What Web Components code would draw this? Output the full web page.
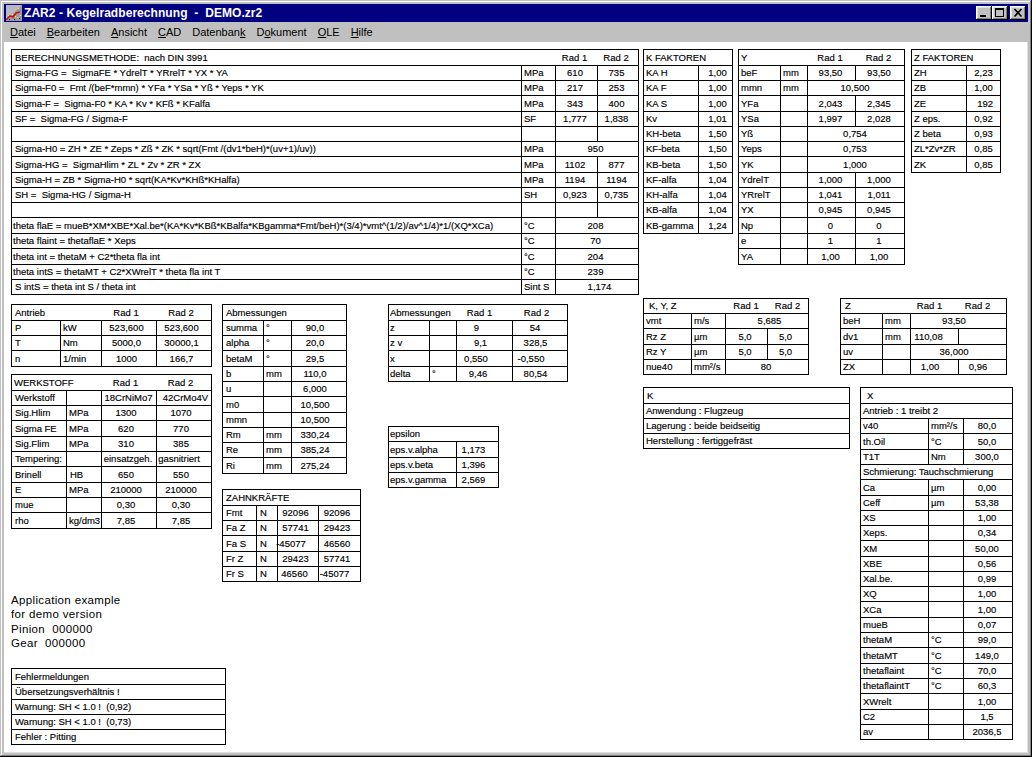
<!DOCTYPE html>
<html lang="de"><head><meta charset="utf-8"><title>ZAR2</title>
<style>html,body{margin:0;padding:0;background:#c0c0c0}</style></head><body>
<z-window>
<z-stack slot="content" dir="row">
 <z-stack w="628">
  <z-t s="1.5" cols="510 34 42 41" rows="16 15 15 16 15 15 15 16 15 15 15 16 15 16 15 15">
   <z-r><z-c span="2" x="3">BERECHNUNGSMETHODE:&nbsp; nach DIN 3991</z-c><z-c nb a="c">Rad 1</z-c><z-c nb a="c">Rad 2</z-c></z-r>
   <z-r><z-c x="3">Sigma-FG =&nbsp; SigmaFE * YdrelT * YRrelT * YX * YA</z-c><z-c>MPa</z-c><z-c a="c">610</z-c><z-c a="c">735</z-c></z-r>
   <z-r><z-c x="3">Sigma-F0 =&nbsp; Fmt /(beF*mmn) * YFa * YSa * Yß * Yeps * YK</z-c><z-c>MPa</z-c><z-c a="c">217</z-c><z-c a="c">253</z-c></z-r>
   <z-r><z-c x="3">Sigma-F =&nbsp; Sigma-F0 * KA * Kv * KFß * KFalfa</z-c><z-c>MPa</z-c><z-c a="c">343</z-c><z-c a="c">400</z-c></z-r>
   <z-r><z-c x="3">SF =&nbsp; Sigma-FG / Sigma-F</z-c><z-c>SF</z-c><z-c a="c">1,777</z-c><z-c a="c">1,838</z-c></z-r>
   <z-r><z-c></z-c><z-c></z-c><z-c></z-c><z-c></z-c></z-r>
   <z-r><z-c x="3">Sigma-H0 = ZH * ZE * Zeps * Zß * ZK * sqrt(Fmt /(dv1*beH)*(uv+1)/uv))</z-c><z-c>MPa</z-c><z-c span="2" a="c">950</z-c></z-r>
   <z-r><z-c x="3">Sigma-HG =&nbsp; SigmaHlim * ZL * Zv * ZR * ZX</z-c><z-c>MPa</z-c><z-c a="c">1102</z-c><z-c a="c">877</z-c></z-r>
   <z-r><z-c x="3">Sigma-H = ZB * Sigma-H0 * sqrt(KA*Kv*KHß*KHalfa)</z-c><z-c>MPa</z-c><z-c a="c">1194</z-c><z-c a="c">1194</z-c></z-r>
   <z-r><z-c x="3">SH =&nbsp; Sigma-HG / Sigma-H</z-c><z-c>SH</z-c><z-c a="c">0,923</z-c><z-c a="c">0,735</z-c></z-r>
   <z-r><z-c></z-c><z-c></z-c><z-c></z-c><z-c></z-c></z-r>
   <z-r><z-c x="1">theta flaE = mueB*XM*XBE*Xal.be*(KA*Kv*KBß*KBalfa*KBgamma*Fmt/beH)*(3/4)*vmt^(1/2)/av^1/4)*1/(XQ*XCa)</z-c><z-c>°C</z-c><z-c span="2" a="c">208</z-c></z-r>
   <z-r><z-c x="1">theta flaint = thetaflaE * Xeps</z-c><z-c>°C</z-c><z-c span="2" a="c">70</z-c></z-r>
   <z-r><z-c x="1">theta int = thetaM + C2*theta fla int</z-c><z-c>°C</z-c><z-c span="2" a="c">204</z-c></z-r>
   <z-r><z-c x="1">theta intS = thetaMT + C2*XWrelT * theta fla int T</z-c><z-c>°C</z-c><z-c span="2" a="c">239</z-c></z-r>
   <z-r><z-c x="3">S intS = theta int S / theta int</z-c><z-c>Sint S</z-c><z-c span="2" a="c" dx="-2.5">1,174</z-c></z-r>
  </z-t>
  <z-stack dir="row" mt="9">
   <z-stack w="211">
    <z-t s="2.5" cols="49 41 55 55" rows="16 15 15 16">
     <z-r><z-c span="2" x="3">Antrieb</z-c><z-c nb a="c">Rad 1</z-c><z-c nb a="c">Rad 2</z-c></z-r>
     <z-r><z-c x="3">P</z-c><z-c>kW</z-c><z-c a="c">523,600</z-c><z-c a="c">523,600</z-c></z-r>
     <z-r><z-c x="3">T</z-c><z-c>Nm</z-c><z-c a="c">5000,0</z-c><z-c a="c">30000,1</z-c></z-r>
     <z-r><z-c x="3">n</z-c><z-c>1/min</z-c><z-c a="c">1000</z-c><z-c a="c">166,7</z-c></z-r>
    </z-t>
    <z-t s="3" mt="7" cols="55 35 55 55" rows="16 15 15 16 15 15 16 15 15 16">
     <z-r><z-c span="2" x="2">WERKSTOFF</z-c><z-c nb a="c">Rad 1</z-c><z-c nb a="c">Rad 2</z-c></z-r>
     <z-r><z-c x="3">Werkstoff</z-c><z-c></z-c><z-c a="c" dx=".5">18CrNiMo7</z-c><z-c a="c" dx="-1.5">42CrMo4V</z-c></z-r>
     <z-r><z-c x="3">Sig.Hlim</z-c><z-c>MPa</z-c><z-c a="c">1300</z-c><z-c a="c">1070</z-c></z-r>
     <z-r><z-c x="3">Sigma FE</z-c><z-c>MPa</z-c><z-c a="c">620</z-c><z-c a="c">770</z-c></z-r>
     <z-r><z-c x="3">Sig.Flim</z-c><z-c>MPa</z-c><z-c a="c">310</z-c><z-c a="c">385</z-c></z-r>
     <z-r><z-c x="3">Tempering:</z-c><z-c></z-c><z-c a="c" dx="1">einsatzgeh.</z-c><z-c a="c" dx="5">gasnitriert</z-c></z-r>
     <z-r><z-c x="3">Brinell</z-c><z-c x="3">HB</z-c><z-c a="c">650</z-c><z-c a="c">550</z-c></z-r>
     <z-r><z-c x="3">E</z-c><z-c>MPa</z-c><z-c a="c">210000</z-c><z-c a="c">210000</z-c></z-r>
     <z-r><z-c x="3">mue</z-c><z-c></z-c><z-c a="c">0,30</z-c><z-c a="c">0,30</z-c></z-r>
     <z-r><z-c x="3">rho</z-c><z-c>kg/dm3</z-c><z-c a="c">7,85</z-c><z-c a="c">7,85</z-c></z-r>
    </z-t>
    <z-note mt="64">Application example<br>for demo version<br>Pinion&nbsp; 000000<br>Gear&nbsp; 000000</z-note>
    <z-t mt="18" cols="214" rows="16 15 15 15 15">
     <z-r><z-c x="3">Fehlermeldungen</z-c></z-r>
     <z-r><z-c x="3">Übersetzungsverhältnis !</z-c></z-r>
     <z-r><z-c x="3">Warnung: SH &lt; 1.0 !&nbsp; (0,92)</z-c></z-r>
     <z-r><z-c x="3">Warnung: SH &lt; 1.0 !&nbsp; (0,73)</z-c></z-r>
     <z-r><z-c x="3">Fehler : Pitting</z-c></z-r>
    </z-t>
   </z-stack>
   <z-stack w="166">
    <z-t s="4" cols="41 28 55" rows="16 15 15 16 15 15 16 15 15 15 16">
     <z-r><z-c span="3" x="3">Abmessungen</z-c></z-r>
     <z-r><z-c x="3">summa</z-c><z-c>°</z-c><z-c a="c">90,0</z-c></z-r>
     <z-r><z-c x="3">alpha</z-c><z-c>°</z-c><z-c a="c">20,0</z-c></z-r>
     <z-r><z-c x="3">betaM</z-c><z-c>°</z-c><z-c a="c">29,5</z-c></z-r>
     <z-r><z-c x="3">b</z-c><z-c>mm</z-c><z-c a="c">110,0</z-c></z-r>
     <z-r><z-c x="3">u</z-c><z-c></z-c><z-c a="c">6,000</z-c></z-r>
     <z-r><z-c x="3">m0</z-c><z-c></z-c><z-c a="c">10,500</z-c></z-r>
     <z-r><z-c x="3">mmn</z-c><z-c></z-c><z-c a="c">10,500</z-c></z-r>
     <z-r><z-c x="3">Rm</z-c><z-c>mm</z-c><z-c a="c">330,24</z-c></z-r>
     <z-r><z-c x="3">Re</z-c><z-c>mm</z-c><z-c a="c">385,24</z-c></z-r>
     <z-r><z-c x="3">Ri</z-c><z-c>mm</z-c><z-c a="c">275,24</z-c></z-r>
    </z-t>
    <z-t s="2.5" mt="15" cols="34 21 41 42" rows="16 15 15 16 15 15">
     <z-r><z-c span="4" x="3">ZAHNKRÄFTE</z-c></z-r>
     <z-r><z-c x="3">Fmt</z-c><z-c x="3">N</z-c><z-c a="c">92096</z-c><z-c a="c">92096</z-c></z-r>
     <z-r><z-c x="3">Fa Z</z-c><z-c x="3">N</z-c><z-c a="c">57741</z-c><z-c a="c">29423</z-c></z-r>
     <z-r><z-c x="3">Fa S</z-c><z-c x="3">N</z-c><z-c a="c" dx="7">-45077</z-c><z-c a="c">46560</z-c></z-r>
     <z-r><z-c x="3">Fr Z</z-c><z-c x="3">N</z-c><z-c a="c">29423</z-c><z-c a="c">57741</z-c></z-r>
     <z-r><z-c x="3">Fr S</z-c><z-c x="3">N</z-c><z-c a="c" dx="3.5">46560</z-c><z-c a="c" dx="5">-45077</z-c></z-r>
    </z-t>
   </z-stack>
   <z-stack>
    <z-t cols="41 27 56 55" rows="16 15 15 16 15">
     <z-r><z-c span="2" x="1">Abmessungen</z-c><z-c nb a="c" dx="4.5">Rad 1</z-c><z-c nb a="c" dx="3">Rad 2</z-c></z-r>
     <z-r><z-c x="1">z</z-c><z-c></z-c><z-c a="c" dx="8">9</z-c><z-c a="c" dx="5">54</z-c></z-r>
     <z-r><z-c x="1">z v</z-c><z-c></z-c><z-c a="c" dx="4">9,1</z-c><z-c a="c" dx="4.5">328,5</z-c></z-r>
     <z-r><z-c x="1">x</z-c><z-c></z-c><z-c a="c" dx="8.5">0,550</z-c><z-c a="c" dx="9">-0,550</z-c></z-r>
     <z-r><z-c x="1">delta</z-c><z-c>°</z-c><z-c a="c" dx="6.5">9,46</z-c><z-c a="c" dx="4.5">80,54</z-c></z-r>
    </z-t>
    <z-t s="4" mt="44" cols="68 42" rows="15 16 15 15">
     <z-r><z-c span="2" x="1">epsilon</z-c></z-r>
     <z-r><z-c x="1">eps.v.alpha</z-c><z-c a="c">1,173</z-c></z-r>
     <z-r><z-c x="1">eps.v.beta</z-c><z-c a="c">1,396</z-c></z-r>
     <z-r><z-c x="1">eps.v.gamma</z-c><z-c a="c">2,569</z-c></z-r>
    </z-t>
   </z-stack>
  </z-stack>
 </z-stack>
 <z-stack ml="4">
  <z-stack dir="row">
   <z-t s="-2" cols="55 34" rows="16 15 15 16 15 15 15 16 15 15 15 16">
    <z-r><z-c span="2" x="2">K FAKTOREN</z-c></z-r>
    <z-r><z-c x="2">KA H</z-c><z-c a="c">1,00</z-c></z-r>
    <z-r><z-c x="2">KA F</z-c><z-c a="c">1,00</z-c></z-r>
    <z-r><z-c x="2">KA S</z-c><z-c a="c">1,00</z-c></z-r>
    <z-r><z-c x="2">Kv</z-c><z-c a="c">1,01</z-c></z-r>
    <z-r><z-c x="2">KH-beta</z-c><z-c a="c">1,50</z-c></z-r>
    <z-r><z-c x="2">KF-beta</z-c><z-c a="c">1,50</z-c></z-r>
    <z-r><z-c x="2">KB-beta</z-c><z-c a="c">1,50</z-c></z-r>
    <z-r><z-c x="2">KF-alfa</z-c><z-c a="c">1,04</z-c></z-r>
    <z-r><z-c x="2">KH-alfa</z-c><z-c a="c">1,04</z-c></z-r>
    <z-r><z-c x="2">KB-alfa</z-c><z-c a="c">1,04</z-c></z-r>
    <z-r><z-c x="2">KB-gamma</z-c><z-c a="c">1,24</z-c></z-r>
   </z-t>
   <z-t s="1" ml="5" cols="42 27 48 49" rows="16 15 15 16 15 15 15 16 15 15 15 16 15 16">
    <z-r><z-c span="2" x="2">Y</z-c><z-c nb a="c">Rad 1</z-c><z-c nb a="c">Rad 2</z-c></z-r>
    <z-r><z-c x="2">beF</z-c><z-c>mm</z-c><z-c a="c">93,50</z-c><z-c a="c">93,50</z-c></z-r>
    <z-r><z-c x="2">mmn</z-c><z-c>mm</z-c><z-c span="2" a="c">10,500</z-c></z-r>
    <z-r><z-c x="2">YFa</z-c><z-c></z-c><z-c a="c">2,043</z-c><z-c a="c">2,345</z-c></z-r>
    <z-r><z-c x="2">YSa</z-c><z-c></z-c><z-c a="c">1,997</z-c><z-c a="c">2,028</z-c></z-r>
    <z-r><z-c x="2">Yß</z-c><z-c></z-c><z-c span="2" a="c">0,754</z-c></z-r>
    <z-r><z-c x="2">Yeps</z-c><z-c></z-c><z-c span="2" a="c">0,753</z-c></z-r>
    <z-r><z-c x="2">YK</z-c><z-c></z-c><z-c span="2" a="c">1,000</z-c></z-r>
    <z-r><z-c x="2">YdrelT</z-c><z-c></z-c><z-c a="c">1,000</z-c><z-c a="c">1,000</z-c></z-r>
    <z-r><z-c x="2">YRrelT</z-c><z-c></z-c><z-c a="c">1,041</z-c><z-c a="c">1,011</z-c></z-r>
    <z-r><z-c x="2">YX</z-c><z-c></z-c><z-c a="c">0,945</z-c><z-c a="c">0,945</z-c></z-r>
    <z-r><z-c x="2">Np</z-c><z-c></z-c><z-c a="c">0</z-c><z-c a="c">0</z-c></z-r>
    <z-r><z-c x="2">e</z-c><z-c></z-c><z-c a="c">1</z-c><z-c a="c">1</z-c></z-r>
    <z-r><z-c x="2">YA</z-c><z-c></z-c><z-c a="c">1,00</z-c><z-c a="c">1,00</z-c></z-r>
   </z-t>
   <z-t ml="6" cols="55 34" rows="16 15 15 16 15 15 15 16">
    <z-r><z-c span="2" x="2">Z FAKTOREN</z-c></z-r>
    <z-r><z-c x="2">ZH</z-c><z-c a="c">2,23</z-c></z-r>
    <z-r><z-c x="2">ZB</z-c><z-c a="c">1,00</z-c></z-r>
    <z-r><z-c x="2">ZE</z-c><z-c a="r">192</z-c></z-r>
    <z-r><z-c x="2">Z eps.</z-c><z-c a="c">0,92</z-c></z-r>
    <z-r><z-c x="2">Z beta</z-c><z-c a="c">0,93</z-c></z-r>
    <z-r><z-c x="2">ZL*Zv*ZR</z-c><z-c a="c">0,85</z-c></z-r>
    <z-r><z-c x="2">ZK</z-c><z-c a="c">0,85</z-c></z-r>
   </z-t>
  </z-stack>
  <z-stack dir="row" mt="33">
   <z-stack w="197">
    <z-t cols="48 34 42 41" rows="15 15 16 15 15">
     <z-r><z-c span="2" x="5">K, Y, Z</z-c><z-c nb a="c">Rad 1</z-c><z-c nb a="c">Rad 2</z-c></z-r>
     <z-r><z-c x="2">vmt</z-c><z-c>m/s</z-c><z-c span="2" a="c" dx="-2.5">5,685</z-c></z-r>
     <z-r><z-c x="2">Rz Z</z-c><z-c>µm</z-c><z-c a="c" dx="1.5">5,0</z-c><z-c a="c" dx="2.5">5,0</z-c></z-r>
     <z-r><z-c x="2">Rz Y</z-c><z-c>µm</z-c><z-c a="c" dx="1.5">5,0</z-c><z-c a="c" dx="2.5">5,0</z-c></z-r>
     <z-r><z-c x="2">nue40</z-c><z-c>mm²/s</z-c><z-c span="2" a="c" dx="1">80</z-c></z-r>
    </z-t>
    <z-t mt="12" cols="206" rows="16 15 15 15">
     <z-r><z-c x="3">K</z-c></z-r>
     <z-r><z-c x="2">Anwendung : Flugzeug</z-c></z-r>
     <z-r><z-c x="2">Lagerung : beide beidseitig</z-c></z-r>
     <z-r><z-c x="2">Herstellung : fertiggefräst</z-c></z-r>
    </z-t>
   </z-stack>
   <z-stack>
    <z-t s="4.5" cols="42 28 48 48" rows="15 15 16 15 15">
     <z-r><z-c span="2" x="4">Z</z-c><z-c nb a="c">Rad 1</z-c><z-c nb a="c">Rad 2</z-c></z-r>
     <z-r><z-c x="2">beH</z-c><z-c>mm</z-c><z-c span="2" a="c">93,50</z-c></z-r>
     <z-r><z-c x="2">dv1</z-c><z-c>mm</z-c><z-c a="c" dx="6">110,08</z-c><z-c></z-c></z-r>
     <z-r><z-c x="2">uv</z-c><z-c></z-c><z-c span="2" a="c">36,000</z-c></z-r>
     <z-r><z-c x="2">ZX</z-c><z-c></z-c><z-c a="c">1,00</z-c><z-c a="c">0,96</z-c></z-r>
    </z-t>
    <z-t s="1" mt="12" ml="20" cols="68 35 49" rows="16 15 15 16 15 15 16 15 15 15 16 15 15 15 16 15 15 16 15 15 16 15 15">
     <z-r><z-c span="3" x="6">X</z-c></z-r>
     <z-r><z-c span="3" x="2">Antrieb : 1 treibt 2</z-c></z-r>
     <z-r><z-c x="2">v40</z-c><z-c>mm²/s</z-c><z-c a="c">80,0</z-c></z-r>
     <z-r><z-c x="2">th.Oil</z-c><z-c>°C</z-c><z-c a="c">50,0</z-c></z-r>
     <z-r><z-c x="2">T1T</z-c><z-c>Nm</z-c><z-c a="c">300,0</z-c></z-r>
     <z-r><z-c span="3" x="2">Schmierung: Tauchschmierung</z-c></z-r>
     <z-r><z-c x="2">Ca</z-c><z-c>µm</z-c><z-c a="c">0,00</z-c></z-r>
     <z-r><z-c x="2">Ceff</z-c><z-c>µm</z-c><z-c a="c">53,38</z-c></z-r>
     <z-r><z-c x="2">XS</z-c><z-c></z-c><z-c a="c">1,00</z-c></z-r>
     <z-r><z-c x="2">Xeps.</z-c><z-c></z-c><z-c a="c">0,34</z-c></z-r>
     <z-r><z-c x="2">XM</z-c><z-c></z-c><z-c a="c">50,00</z-c></z-r>
     <z-r><z-c x="2">XBE</z-c><z-c></z-c><z-c a="c">0,56</z-c></z-r>
     <z-r><z-c x="2">Xal.be.</z-c><z-c></z-c><z-c a="c">0,99</z-c></z-r>
     <z-r><z-c x="2">XQ</z-c><z-c></z-c><z-c a="c">1,00</z-c></z-r>
     <z-r><z-c x="2">XCa</z-c><z-c></z-c><z-c a="c">1,00</z-c></z-r>
     <z-r><z-c x="2">mueB</z-c><z-c></z-c><z-c a="c">0,07</z-c></z-r>
     <z-r><z-c x="2">thetaM</z-c><z-c>°C</z-c><z-c a="c">99,0</z-c></z-r>
     <z-r><z-c x="2">thetaMT</z-c><z-c>°C</z-c><z-c a="c">149,0</z-c></z-r>
     <z-r><z-c x="2">thetaflaint</z-c><z-c>°C</z-c><z-c a="c">70,0</z-c></z-r>
     <z-r><z-c x="2">thetaflaintT</z-c><z-c>°C</z-c><z-c a="c">60,3</z-c></z-r>
     <z-r><z-c x="2">XWrelt</z-c><z-c></z-c><z-c a="c">1,00</z-c></z-r>
     <z-r><z-c x="2">C2</z-c><z-c></z-c><z-c a="c">1,5</z-c></z-r>
     <z-r><z-c x="2">av</z-c><z-c></z-c><z-c a="c">2036,5</z-c></z-r>
    </z-t>
   </z-stack>
  </z-stack>
 </z-stack>
</z-stack>
</z-window>
<script>
function def(name, html, extra){
  customElements.define(name, class extends HTMLElement{
    constructor(){super();this.attachShadow({mode:'open'}).innerHTML=html;}
    connectedCallback(){extra&&extra(this);}
  });
}
const FONT='"Liberation Sans",Arial,sans-serif';
const offsets=h=>{
  for(const [a,p] of [['mt','marginTop'],['ml','marginLeft'],['w','width']])
    if(h.hasAttribute(a)) h.style[p]=h.getAttribute(a)+'px';
};
def('z-window',`<style>
:host{display:flex;flex-direction:column;box-sizing:border-box;width:1032px;height:757px;padding:4px;background:#c0c0c0;
 box-shadow:inset -1px -1px 0 #000,inset 1px 1px 0 #c0c0c0,inset -2px -2px 0 #808080,inset 2px 2px 0 #fff;font-family:${FONT};overflow:hidden}
.title{height:18px;background:#000080;color:#fff;display:flex;align-items:center;padding:0 2px;flex:none}
.icon{width:16px;height:16px;margin-right:2px;flex:none;display:block}
.cap{font:bold 12px/18px ${FONT};white-space:pre;flex:1;letter-spacing:.06px}
.btn{width:16px;height:14px;box-sizing:border-box;background:#c0c0c0;box-shadow:inset -1px -1px 0 #000,inset 1px 1px 0 #fff,inset -2px -2px 0 #808080,inset 2px 2px 0 #dfdfdf;display:block}
.btn.x{margin-left:2px}
.menu{height:20px;flex:none;display:flex;align-items:center;padding-left:6px;gap:11px;font:11px/20px ${FONT};color:#000}
.menu u{text-underline-offset:1px}
.content{flex:1;background:#fff;padding:7px;box-sizing:border-box;min-height:0;box-shadow:inset -1px -1px 0 #dfdfdf;color:#000}
</style>
<div class="title">
<svg class="icon" viewBox="0 0 16 16"><rect width="16" height="16" fill="#9a9aa6"/><path d="M0 0h16L0 16z" fill="#b8b8c0"/><path d="M0 15 4 11 7 12 10 8 14 7" fill="none" stroke="#d01010" stroke-width="1.6"/><path d="M2 10h1v1H2zM6 9h1v1H6zM12 3h1v1h-1zM14 10h1v1h-1zM9 11h1v1H9zM11 12h1v1h-1z" fill="#ffff00"/><path d="M3 14h1v1H3zM8 14h1v1H8zM13 13h1v1h-1z" fill="#000"/></svg>
<span class="cap">ZAR2 - Kegelradberechnung  -  DEMO.zr2</span>
<svg class="btn" viewBox="0 0 16 14"><path d="M4 9h6v2H4z" fill="#000"/></svg>
<svg class="btn" viewBox="0 0 16 14"><path d="M3 2h9v9H3zM4 4v6h7V4z" fill="#000" fill-rule="evenodd"/></svg>
<svg class="btn x" viewBox="0 0 16 14"><path d="M4.5 3 11.5 10.5M11.5 3 4.5 10.5" stroke="#000" stroke-width="1.6" fill="none"/></svg>
</div>
<div class="menu"><span><u>D</u>atei</span><span><u>B</u>earbeiten</span><span><u>A</u>nsicht</span><span><u>C</u>AD</span><span>Datenban<u>k</u></span><span>D<u>o</u>kument</span><span><u>O</u>LE</span><span><u>H</u>ilfe</span></div>
<div class="content"><slot name="content"></slot></div>`);
def('z-stack',`<style>:host{display:flex;flex-direction:column;align-items:flex-start;flex:none}:host([dir=row]){flex-direction:row}</style><slot></slot>`,offsets);
def('z-t',`<style>:host{display:block;flex:none;box-sizing:border-box;border:1px solid #000;background:#fff;font:9.5px/14px ${FONT};color:#000;white-space:nowrap;-webkit-text-stroke:.15px #000}</style><slot></slot>`,h=>{
  offsets(h);
  const c=h.getAttribute('cols').split(' ').map(Number), r=h.getAttribute('rows').split(' ').map(Number);
  h.style.setProperty('--cols',c.map((v,i)=>(i?v:v-1)+'px').join(' '));
  h.style.width=c.reduce((a,b)=>a+b,0)+1+'px';
  [...h.children].forEach((row,i)=>{row.style.height=(i?r[i]:r[i]-1)+'px';});
});
def('z-r',`<style>:host{display:grid;grid-template-columns:var(--cols);box-sizing:border-box;border-top:1px solid #000}:host(:first-child){border-top:0}</style><slot></slot>`);
def('z-c',`<style>:host{display:flex;align-items:center;box-sizing:border-box;border-left:1px solid #000;padding-left:2px;min-width:0;overflow:visible;height:100%}
:host(:first-child),:host([nb]){border-left:0}
:host([a=c]){justify-content:center;padding-left:0}
:host([a=r]){justify-content:flex-end;padding:0 7px 0 0}</style><slot></slot>`,h=>{
  if(h.hasAttribute('span')) h.style.gridColumn='span '+h.getAttribute('span');
  if(h.hasAttribute('x')) h.style.paddingLeft=h.getAttribute('x')+'px';
  if(h.getAttribute('a')==='c'){
    const t=h.closest('z-t');
    const d=parseFloat(h.getAttribute('dx') ?? (t&&t.getAttribute('s')) ?? 0);
    if(d>0) h.style.paddingRight=2*d+'px';
    if(d<0) h.style.paddingLeft=-2*d+'px';
  }
});
def('z-note',`<style>:host{display:block;font:11.5px/14.3px ${FONT};letter-spacing:.35px;color:#000;white-space:nowrap}</style><slot></slot>`,offsets);
</script>
</body></html>
